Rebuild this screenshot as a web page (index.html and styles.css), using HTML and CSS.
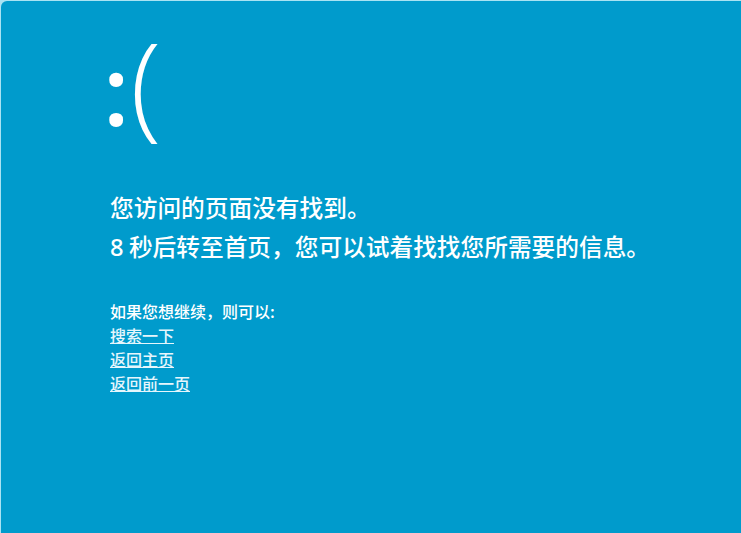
FILE: index.html
```html
<!DOCTYPE html>
<html lang="zh-CN">
<head>
<meta charset="utf-8">
<title>页面没有找到</title>
<link rel="stylesheet" href="styles.css">
</head>
<body>
<main class="screen">
  <div class="face"><span class="colon">:</span><span class="paren">(</span></div>
  <section class="message">
    <p class="line">您访问的页面没有找到。</p>
    <p class="line"><span class="num">8</span> 秒后转至首页，您可以试着找找您所需要的信息。</p>
  </section>
  <section class="options">
    <p class="hint">如果您想继续，则可以:</p>
    <a class="link" href="#">搜索一下</a>
    <a class="link" href="#">返回主页</a>
    <a class="link" href="#">返回前一页</a>
  </section>
</main>
</body>
</html>
```
FILE: styles.css
```css
html, body {
  margin: 0;
  padding: 0;
  height: 100%;
}
body {
  background: #a9e3f3;
  font-family: "Noto Sans", "Noto Sans CJK SC", sans-serif;
}
.screen {
  box-sizing: border-box;
  margin: 1px 0 0 1px;
  height: calc(100% - 1px);
  background: #009bcc;
  border-top-left-radius: 6px;
  color: #ffffff;
  padding: 16px 0 0 106px;
  display: flex;
  flex-direction: column;
}
.face {
  font-family: "Open Sans", sans-serif;
  line-height: 130px;
  height: 130px;
  margin: 0 0 14px -4px;
}
.colon {
  font-size: 96px;
  font-weight: 600;
  margin-right: 1px;
}
.paren {
  font-size: 114px;
  font-weight: 300;
}
.message {
  margin-top: 27px;
  padding-left: 3px;
}
.line {
  margin: 0;
  font-family: "Noto Sans CJK SC", sans-serif;
  font-weight: 500;
  font-size: 23.7px;
  line-height: 39px;
}
.num {
  font-family: "Noto Sans", sans-serif;
}
.options {
  margin-top: 32px;
  padding-left: 3px;
  display: flex;
  flex-direction: column;
  align-items: flex-start;
  font-family: "Noto Sans CJK SC", sans-serif;
  font-weight: 500;
  font-size: 16px;
  line-height: 24px;
}
.hint {
  margin: 0;
}
.link {
  color: #e6f6fc;
  text-decoration: underline;
}
```
